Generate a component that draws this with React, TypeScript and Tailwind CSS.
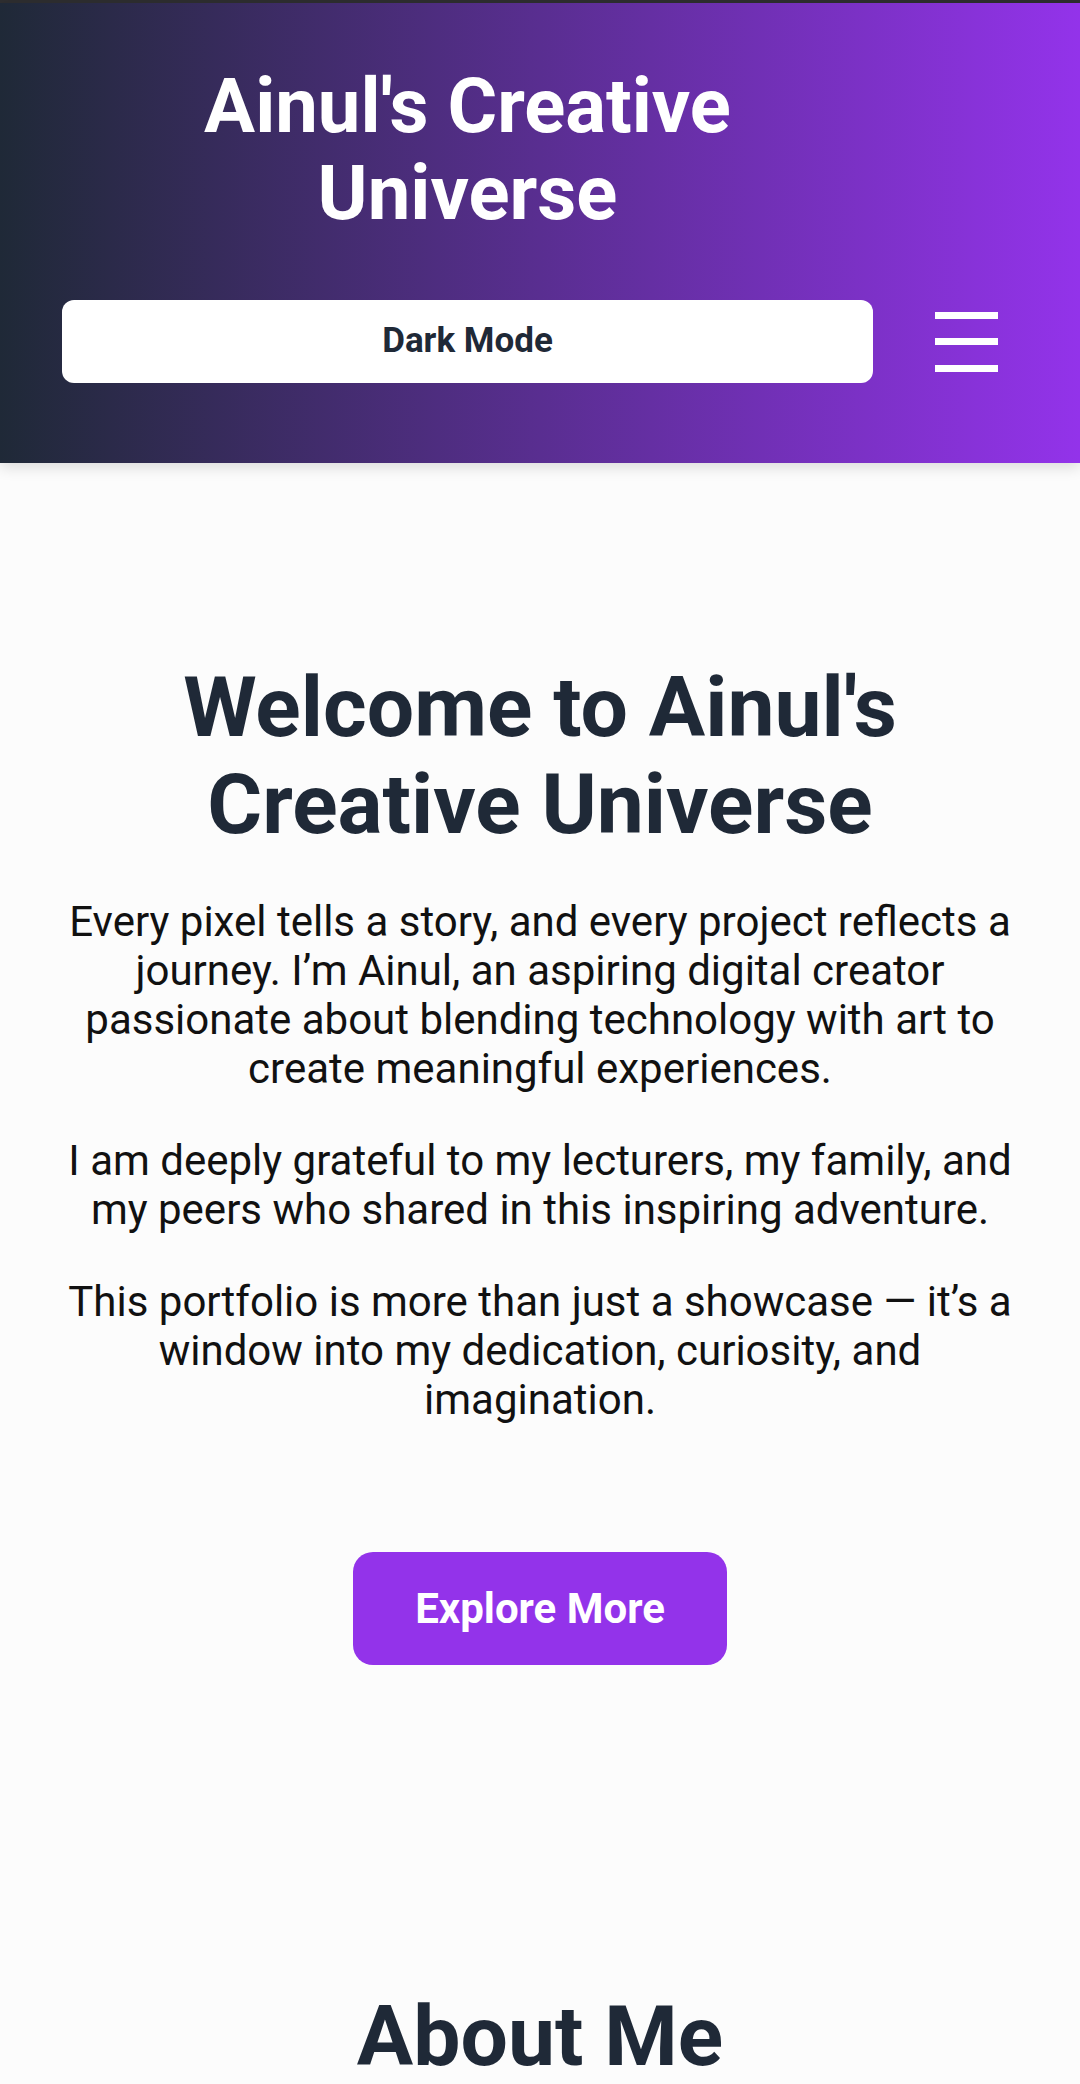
import React from 'react';

const App: React.FC = () => {
    return (
        <div className="min-h-screen bg-[#fcfcfc] font-['Roboto',sans-serif]">
            <div className="h-[3px] bg-[#2e2e30]" />
            <header className="bg-[linear-gradient(to_right,#1f2937,#9333ea)] pl-[62px] pr-[82px] pt-[60px] pb-[80px] shadow-[0_4px_14px_rgba(0,0,0,0.14)]">
                <div className="w-[811px]">
                    <h1 className="text-center text-[76px] leading-[87px] font-bold text-white">
                        Ainul's Creative
                        <br />
                        Universe
                    </h1>
                </div>
                <div className="mt-[63px] flex items-center justify-between">
                    <button className="w-[811px] h-[83px] rounded-[12px] bg-white text-[35px] font-bold text-[#1f2937]">
                        Dark Mode
                    </button>
                    <div className="flex h-[60px] w-[63px] flex-col justify-between">
                        <span className="h-[7px] bg-white" />
                        <span className="h-[7px] bg-white" />
                        <span className="h-[7px] bg-white" />
                    </div>
                </div>
            </header>

            <main>
                <section className="px-[60px] pt-[196px] pb-[160px] text-center">
                    <h2 className="text-[84px] leading-[97px] font-bold text-[#1f2937]">
                        Welcome to Ainul's
                        <br />
                        Creative Universe
                    </h2>
                    <div className="mt-[44px] flex flex-col gap-[43px] text-[42px] leading-[49px] text-[#111111]">
                        <p>
                            Every pixel tells a story, and every project reflects a journey. I’m Ainul, an aspiring digital creator passionate about blending technology with art to create meaningful experiences.
                        </p>
                        <p>
                            I am deeply grateful to my lecturers, my family, and my peers who shared in this inspiring adventure.
                        </p>
                        <p>
                            This portfolio is more than just a showcase — it’s a window into my dedication, curiosity, and imagination.
                        </p>
                    </div>
                    <button className="mt-[128px] h-[113px] w-[374px] rounded-[20px] bg-[#9333ea] text-[42px] font-bold text-white">
                        Explore More
                    </button>
                </section>

                <section className="px-[60px] pt-[163px] pb-[80px] text-center">
                    <h2 className="text-[84px] leading-[97px] font-bold text-[#1f2937]">About Me</h2>
                </section>
            </main>
        </div>
    );
};

export default App;
